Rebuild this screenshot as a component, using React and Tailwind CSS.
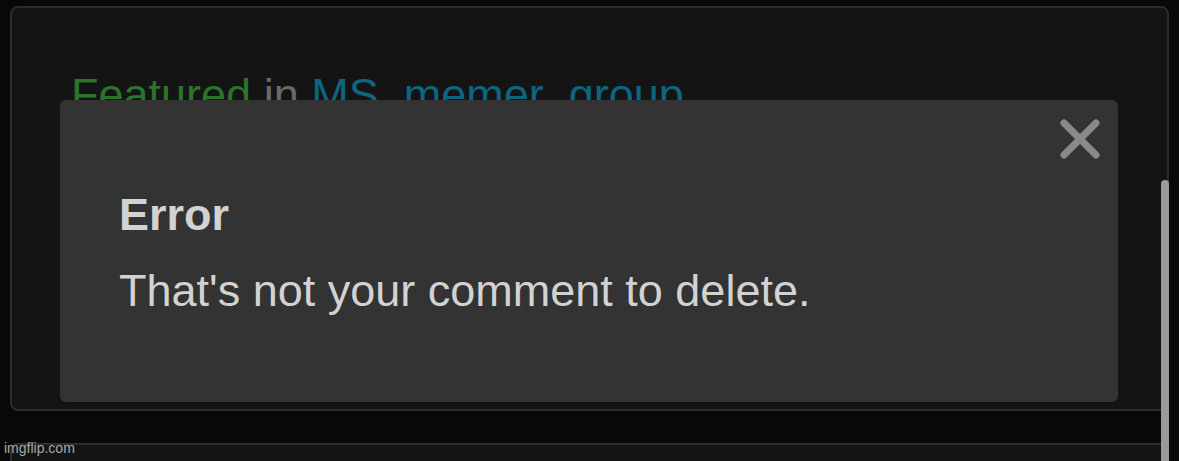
import React from 'react';

const font = { fontFamily: '"Liberation Sans", Arial, sans-serif' };

const CloseIcon = () => (
  <svg width="44" height="44" viewBox="0 0 44 44" className="block">
    <path d="M6 6 L38 38 M38 6 L6 38" stroke="#8a8a8a" strokeWidth="7" strokeLinecap="round" fill="none" />
  </svg>
);

const App = () => {
  return (
    <div className="relative flex h-[461px] w-[1179px] flex-col gap-[32px] overflow-hidden bg-[#080808] px-[10px] pt-[6px]" style={font}>
      {/* Post card */}
      <div className="h-[405px] shrink-0 rounded-lg border-2 border-[#2c2c2c] bg-[#141414] pl-[59px] pt-[64px]">
        <p className="text-[45px] leading-[45px] whitespace-nowrap">
          <span className="text-[#2b742b]">Featured</span>
          <span className="text-[#6a6a6a]"> in </span>
          <span className="text-[#0e6580]">MS_memer_group</span>
        </p>
      </div>

      {/* Next card */}
      <div className="h-[60px] shrink-0 rounded-lg border-2 border-[#2e2e2e] bg-[#141414]" />

      {/* Error dialog */}
      <div className="absolute left-[60px] top-[100px] flex h-[302px] w-[1058px] flex-col rounded-md bg-[#333333] pb-[16px] pl-[59px] pr-[16px] pt-[17px] text-[#d2d2d2]">
        <div className="flex justify-end">
          <button>
            <CloseIcon />
          </button>
        </div>
        <div className="flex flex-col gap-[31px] pt-[31px]">
          <h2 className="text-[45px] font-bold leading-[45px]">Error</h2>
          <p className="text-[45px] leading-[45px]">That's not your comment to delete.</p>
        </div>
      </div>

      {/* Scrollbar */}
      <div className="absolute left-[1161px] top-[180px] h-[300px] w-[8px] rounded-full bg-[#9a9a9a]" />

      {/* Watermark */}
      <span className="absolute bottom-[2px] left-[4px] text-[14px] text-[#a8a8a8]">imgflip.com</span>
    </div>
  );
};

export default App;
